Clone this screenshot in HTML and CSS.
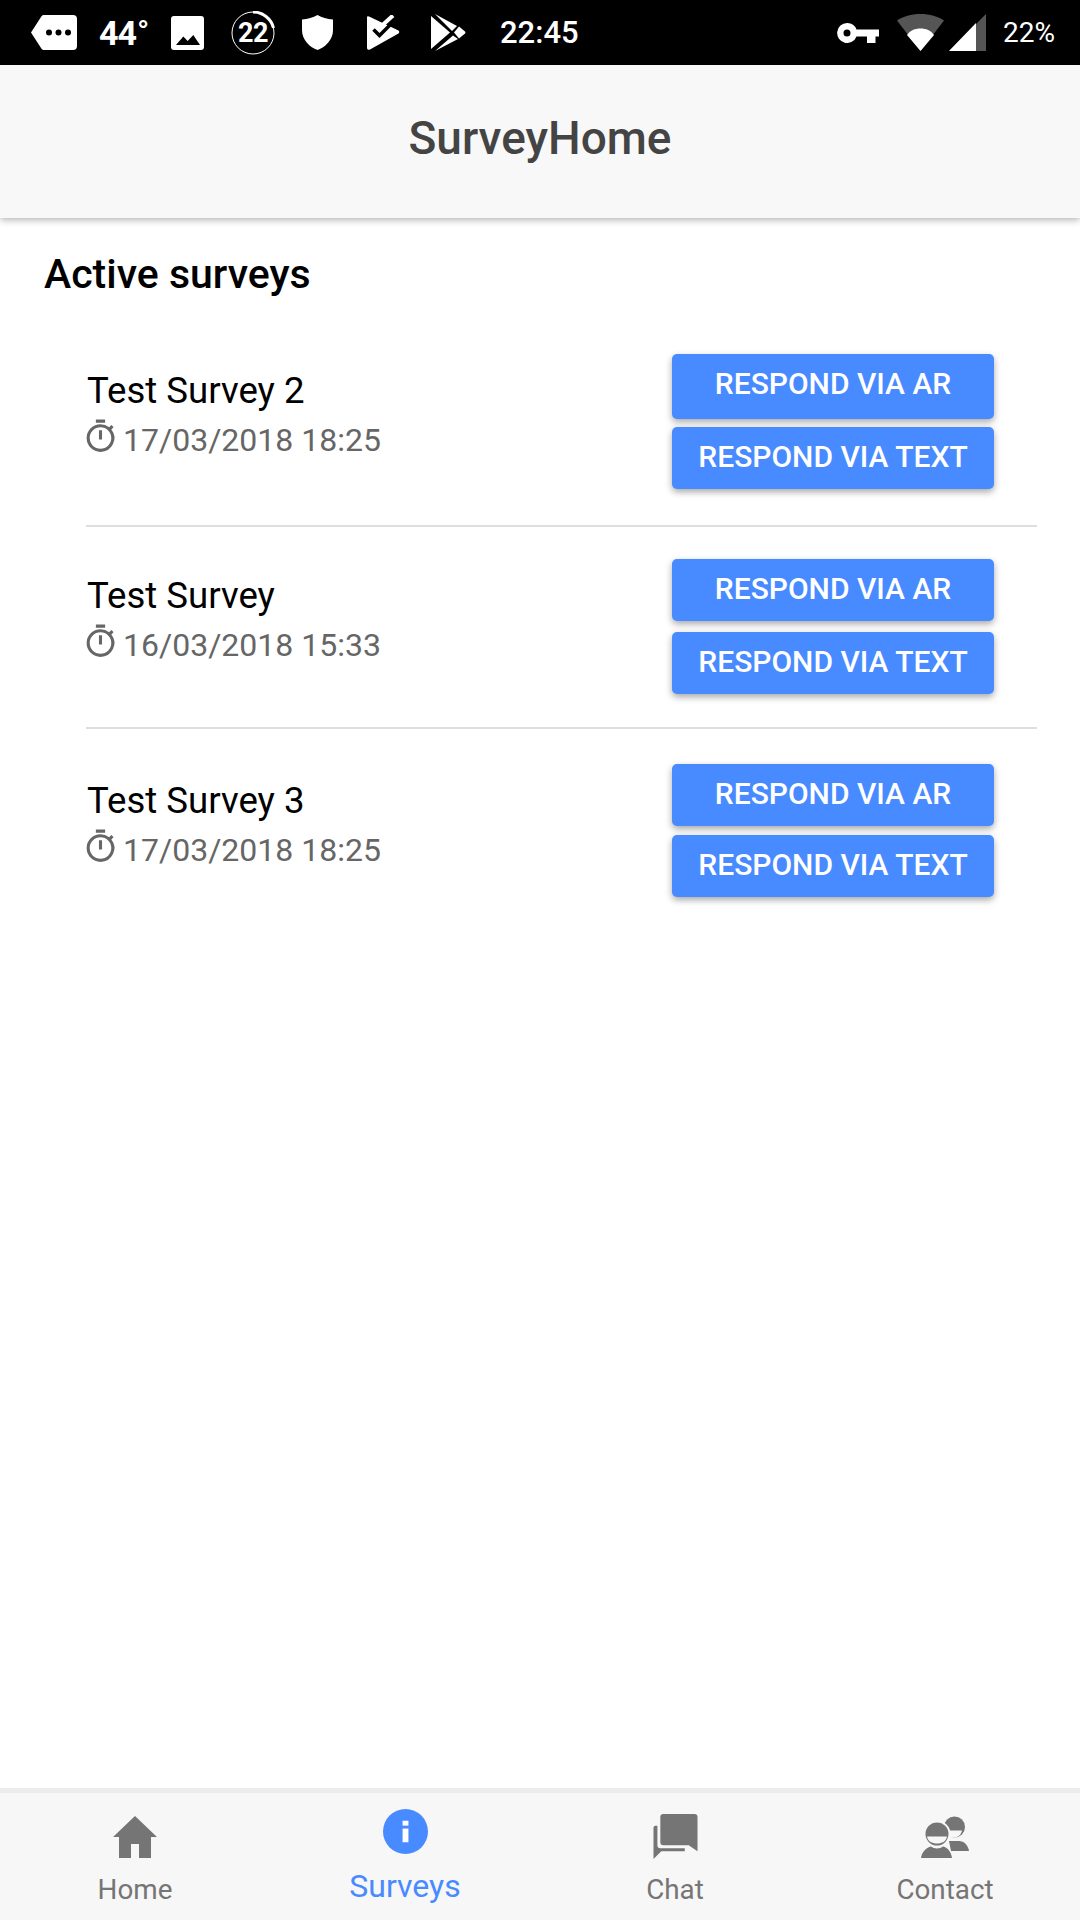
FILE: index.html
```html
<!DOCTYPE html>
<html lang="en">
<head>
<meta charset="utf-8">
<title>SurveyHome</title>
<link rel="stylesheet" href="styles.css">
</head>
<body>
<div class="app">
  <div class="statusbar">
    <div class="status-left">
      <svg class="si si-tag" viewBox="0 0 46 35"><path d="M13 0H42a4 4 0 0 1 4 4V31a4 4 0 0 1-4 4H13a3 3 0 0 1-2.500-1.300L0 17.500 10.500 1.300A3 3 0 0 1 13 0Z" fill="#fff"/><circle cx="18" cy="17.500" r="3" fill="#000"/><circle cx="27.500" cy="17.500" r="3" fill="#000"/><circle cx="37" cy="17.500" r="3" fill="#000"/></svg>
      <span class="st-temp">44<span class="st-deg">°</span></span>
      <svg class="si si-img" viewBox="0 0 33 34"><path d="M3 0H30a3 3 0 0 1 3 3V31a3 3 0 0 1-3 3H3a3 3 0 0 1-3-3V3a3 3 0 0 1 3-3Z" fill="#fff"/><path d="M5 29 12.300 20.500 16.700 25 22.300 19 29 29Z" fill="#000"/></svg>
      <span class="st-ring">
        <svg class="ring-svg" viewBox="0 0 44 44"><circle cx="22" cy="22" r="21" fill="none" stroke="#fff" stroke-width="1"/><path d="M22 1A21 21 0 0 1 42.500 17" fill="none" stroke="#fff" stroke-width="3"/></svg>
        <span class="ring-text">22</span>
      </span>
      <svg class="si si-shield" viewBox="0 0 31 35"><path d="M15.500 0C20 2.500 25 4 31 4.500V15C31 25 23 32.500 15.500 35 8 32.500 0 25 0 15V4.500C6 4 11 2.500 15.500 0Z" fill="#fff"/></svg>
      <svg class="si si-check" viewBox="0 0 33 35"><path d="M0 2.500Q0 .5 2 1.500L31.500 15.500Q33 17 31.500 18.500L3 34.500Q0 35.500 0 33Z" fill="#fff"/><path d="M6.500 14.500 12.500 20.500 29 4" fill="none" stroke="#000" stroke-width="3.500"/><path d="M15 10.500 26 .5" fill="none" stroke="#fff" stroke-width="4"/></svg>
      <svg class="si si-play" viewBox="0 0 35 37"><path d="M0 2 19 18.500 0 35Z" fill="#fff"/><path d="M4 0 26 12 21 17Z" fill="#fff"/><path d="M4 37 22 21.500 27 25Z" fill="#fff"/><path d="M28 12.500 34 17.500Q35 18.500 34 19.500L28 24.500 23 18.500Z" fill="#fff"/></svg>
      <span class="st-time">22:45</span>
    </div>
    <div class="status-right">
      <svg class="si si-key" viewBox="0 0 42 20"><path fill-rule="evenodd" d="M10 0A10 10 0 0 1 19.500 6.500H42V13.500H38.500V20H30V13.500H19.500A10 10 0 1 1 10 0ZM10 6.500A3.500 3.500 0 1 0 10 13.500 3.500 3.500 0 0 0 10 6.500Z" fill="#fff"/></svg>
      <svg class="si si-wifi" viewBox="0 0 47 37"><path d="M0 6.500C6 2.500 14 0 23.500 0S41 2.500 47 6.500L23.500 37Z" fill="#555"/><path d="M10 21C13 16.500 18 14.500 23.500 14.500S34 16.500 37 21L23.500 37Z" fill="#fff"/></svg>
      <svg class="si si-signal" viewBox="0 0 37 37"><path d="M37 0V37H0Z" fill="#555"/><path d="M27 9V37H0Z" fill="#fff"/></svg>
      <span class="st-batt">22%</span>
    </div>
  </div>

  <header class="appbar"><h1 class="appbar-title">SurveyHome</h1></header>

  <main class="content">
    <h2 class="section-title">Active surveys</h2>
    <ul class="survey-list">
      <li class="survey">
        <div class="survey-info">
          <div class="survey-name">Test Survey 2</div>
          <div class="survey-date"><svg class="timer" viewBox="0 0 24 24"><path d="M15 1H9v2h6V1zm-4 13h2V8h-2v6zm8.030-6.610 1.420-1.420c-.43-.51-.9-.99-1.410-1.410l-1.420 1.420A8.962 8.962 0 0 0 12 4a9 9 0 0 0-9 9 9 9 0 0 0 9 9 9 9 0 0 0 7.030-14.610zM12 20c-3.870 0-7-3.130-7-7s3.130-7 7-7 7 3.130 7 7-3.130 7-7 7z"/></svg>17/03/2018 18:25</div>
        </div>
        <div class="survey-actions">
          <button class="btn">RESPOND VIA AR</button>
          <button class="btn">RESPOND VIA TEXT</button>
        </div>
      </li>
      <li class="survey">
        <div class="survey-info">
          <div class="survey-name">Test Survey</div>
          <div class="survey-date"><svg class="timer" viewBox="0 0 24 24"><path d="M15 1H9v2h6V1zm-4 13h2V8h-2v6zm8.030-6.610 1.420-1.420c-.43-.51-.9-.99-1.410-1.410l-1.420 1.420A8.962 8.962 0 0 0 12 4a9 9 0 0 0-9 9 9 9 0 0 0 9 9 9 9 0 0 0 7.030-14.610zM12 20c-3.870 0-7-3.130-7-7s3.130-7 7-7 7 3.130 7 7-3.130 7-7 7z"/></svg>16/03/2018 15:33</div>
        </div>
        <div class="survey-actions">
          <button class="btn">RESPOND VIA AR</button>
          <button class="btn">RESPOND VIA TEXT</button>
        </div>
      </li>
      <li class="survey">
        <div class="survey-info">
          <div class="survey-name">Test Survey 3</div>
          <div class="survey-date"><svg class="timer" viewBox="0 0 24 24"><path d="M15 1H9v2h6V1zm-4 13h2V8h-2v6zm8.030-6.610 1.420-1.420c-.43-.51-.9-.99-1.410-1.410l-1.420 1.420A8.962 8.962 0 0 0 12 4a9 9 0 0 0-9 9 9 9 0 0 0 9 9 9 9 0 0 0 7.030-14.610zM12 20c-3.870 0-7-3.130-7-7s3.130-7 7-7 7 3.130 7 7-3.130 7-7 7z"/></svg>17/03/2018 18:25</div>
        </div>
        <div class="survey-actions">
          <button class="btn">RESPOND VIA AR</button>
          <button class="btn">RESPOND VIA TEXT</button>
        </div>
      </li>
    </ul>
  </main>

  <nav class="tabbar">
    <div class="tab">
      <svg class="tab-icon" viewBox="0 0 44 42"><path d="M22 0 44 21H38V42H26V28H18V42H6V21H0Z" fill="#757575"/></svg>
      <span class="tab-label">Home</span>
    </div>
    <div class="tab tab-active">
      <svg class="tab-icon tab-icon-info" viewBox="0 0 46 46"><circle cx="23" cy="23" r="23" fill="#488aff"/><rect x="20" y="12" width="6" height="5" fill="#fff"/><rect x="20" y="20" width="6" height="14" fill="#fff"/></svg>
      <span class="tab-label">Surveys</span>
    </div>
    <div class="tab">
      <svg class="tab-icon tab-icon-chat" viewBox="0 0 45 46"><path d="M10 0H42a3 3 0 0 1 3 3V38L36 32H10a3 3 0 0 1-3-3V3a3 3 0 0 1 3-3Z" fill="#757575"/><path d="M2 12H4V32a3 3 0 0 0 3 3H32V38H8L0 46V14a2 2 0 0 1 2-2Z" fill="#757575"/></svg>
      <span class="tab-label">Chat</span>
    </div>
    <div class="tab">
      <svg class="tab-icon tab-icon-contact" viewBox="0 0 48 42"><circle cx="33.500" cy="11" r="10.500" fill="#757575"/><path d="M29 14.500H41C40 19 37 21.500 33 21.500H29Z" fill="#f7f7f7"/><path d="M28 25H38C43 25 47 29 48 35H30Z" fill="#757575"/><circle cx="16" cy="18" r="12.500" fill="#757575" stroke="#f7f7f7" stroke-width="2"/><path d="M6 20.500H26C25 25.500 21 27.500 16 27.500S7 25.500 6 20.500Z" fill="#f7f7f7"/><path d="M0 42C1 36 5 31.500 10 30.500 13 33 19 33 22 30.500 27 31.500 30 36 31 42Z" fill="#757575"/></svg>
      <span class="tab-label">Contact</span>
    </div>
  </nav>
</div>
</body>
</html>
```
FILE: styles.css
```css
* { box-sizing: border-box; }
html, body { margin: 0; padding: 0; }
body { font-family: Roboto, "Noto Sans", sans-serif; background: #fff; }
.app { width: 1080px; height: 1920px; display: flex; flex-direction: column; overflow: hidden; }

.statusbar { height: 65px; background: #000; color: #fff; display: flex; justify-content: space-between; align-items: center; flex: none; }
.status-left { display: flex; align-items: center; padding-left: 31px; }
.status-right { display: flex; align-items: center; padding-right: 25px; }
.si { display: block; flex: none; }
.si-tag { width: 46px; height: 35px; }
.st-temp { margin-left: 22px; width: 47px; font-size: 34px; font-weight: 700; display: flex; letter-spacing: -1px; line-height: 40px; }
.st-deg { font-size: 32px; font-weight: 500; line-height: 38px; margin-left: 1px; }
.si-img { width: 33px; height: 34px; margin-left: 25px; }
.st-ring { position: relative; width: 44px; height: 44px; margin-left: 27px; display: flex; align-items: center; justify-content: center; }
.ring-svg { position: absolute; inset: 0; width: 44px; height: 44px; }
.ring-text { font-size: 27px; font-weight: 700; letter-spacing: -.5px; }
.si-shield { width: 31px; height: 35px; margin-left: 27px; }
.si-check { width: 33px; height: 35px; margin-left: 34px; }
.si-play { width: 35px; height: 37px; margin-left: 31px; }
.st-time { margin-left: 34px; font-size: 31px; font-weight: 500; }
.si-key { width: 42px; height: 20px; }
.si-wifi { width: 47px; height: 37px; margin-left: 18px; }
.si-signal { width: 37px; height: 37px; margin-left: 5px; }
.st-batt { margin-left: 17px; font-size: 28px; font-weight: 400; }

.appbar { height: 153px; background: #f8f8f8; display: flex; align-items: center; justify-content: center; flex: none; box-shadow: 0 2px 7px rgba(0,0,0,.3); position: relative; z-index: 1; padding-bottom: 8px; }
.appbar-title { margin: 0; font-size: 46px; line-height: 52px; font-weight: 500; color: #444; }

.content { flex: 1; padding: 32px 43px 0 44px; }
.section-title { margin: 0 0 56px; font-size: 41px; font-weight: 500; color: #000; line-height: 48px; }
.survey-list { list-style: none; margin: 0; padding: 0 0 0 42px; }
.survey { display: flex; justify-content: space-between; align-items: flex-start; padding-right: 43px; border-bottom: 2px solid #dedede; }
.survey:nth-child(1) { padding-bottom: 36px; }
.survey:nth-child(2) { padding-top: 32px; padding-bottom: 33px; }
.survey:nth-child(3) { padding-top: 35px; border-bottom: 0; }
.survey-name { font-size: 36.6px; line-height: 42px; color: #000; padding-top: 16px; margin-left: 1px; }
.survey-date { display: flex; align-items: center; gap: 4px; font-size: 32px; line-height: 40px; color: #666; margin-top: 8px; margin-left: 1px; }
.timer { width: 37px; height: 37px; fill: #666; margin-left: -5px; margin-top: -8px; }
.survey-actions { display: flex; flex-direction: column; gap: 9px; }
.survey:nth-child(1) .survey-actions { gap: 8px; }
.survey:nth-child(2) .survey-actions { gap: 11px; }
.btn { width: 322px; height: 62px; border: 0; border-radius: 5px; background: #488aff; color: #fff; font-family: inherit; font-size: 30px; font-weight: 500; box-shadow: 0 3px 7px rgba(0,0,0,.35); padding: 0 0 3px; }
.survey:nth-child(1) .btn:first-child { height: 65px; padding-bottom: 7px; }

.tabbar { height: 132px; flex: none; background: #f7f7f7; border-top: 5px solid #ececec; display: grid; grid-template-columns: repeat(4, 1fr); }
.tab { display: flex; flex-direction: column; align-items: center; color: #757575; padding-top: 23px; }
.tab-icon { width: 44px; height: 42px; display: block; }
.tab-icon-info { width: 45px; height: 45px; margin-top: -7px; }
.tab-icon-chat { width: 45px; height: 45px; margin-top: -2px; margin-bottom: -1px; }
.tab-icon-contact { width: 48px; height: 42px; }
.tab-label { font-size: 27.8px; line-height: 34px; margin-top: 15px; }
.tab-active { color: #488aff; }
.tab-active .tab-label { font-size: 32px; }
```
